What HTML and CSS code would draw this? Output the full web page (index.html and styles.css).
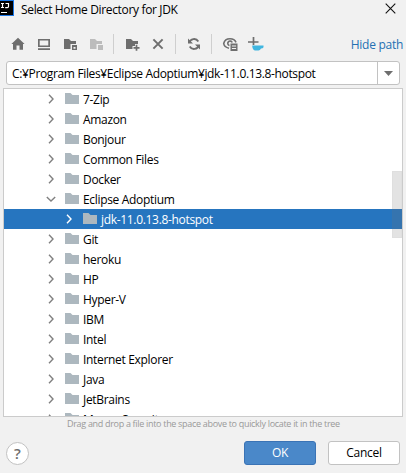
FILE: index.html
```html
<!DOCTYPE html>
<html lang="en">
<head>
<meta charset="utf-8">
<title>Select Home Directory for JDK</title>
<link rel="stylesheet" href="styles.css">
</head>
<body>
<svg class="defs" width="0" height="0">
  <symbol id="folder" viewBox="0 0 14 11"><path d="M0 0h5.5l2 2H14v9H0z" fill="#adb8bf"/></symbol>
  <symbol id="chev" viewBox="0 0 6 10"><path d="M1 .8 5 5 1 9.2" fill="none" stroke="currentColor" stroke-width="1.4"/></symbol>
</svg>
<div class="dialog">
  <header class="titlebar">
    <svg class="logo" width="14" height="16" viewBox="0 0 14 16"><path fill="#1b78e8" d="M0 0h14v16H0z"/><path fill="#000" d="M0 1h13v14H0z"/><path d="M1 3.5h3M2.5 3.5v4M1 7.5h3M5.5 3.5h3v3q0 1.2-1.2 1.2H5.2M1 12.5h6" fill="none" stroke="#fff" stroke-width="1.2"/></svg>
    <h1 class="title">Select Home Directory for JDK</h1>
    <svg class="close" width="11" height="11" viewBox="0 0 11 11"><path d="M.7.7l9.6 9.6M10.3.7L.7 10.3" stroke="#111" stroke-width="1.1"/></svg>
  </header>
  <nav class="toolbar">
    <svg class="tool" viewBox="0 0 16 16"><path fill="#6e6e6e" d="M8 1.8 14.6 8H13v5.7H9.5V9.5h-3v4.2H3V8H1.4z"/></svg>
    <svg class="tool" viewBox="0 0 16 16"><path fill="#6e6e6e" fill-rule="evenodd" d="M2 3h12v8H2zm1.7 1.6v4.8h8.6V4.6zM2 12.3h12V14H2z"/></svg>
    <svg class="tool" viewBox="0 0 16 16"><path fill="#6e6e6e" d="M2 3h5l2 2h5v3H8.5v5H2z"/><path fill="#6e6e6e" fill-rule="evenodd" d="M10 9h5v5h-5zm1.5 2v1.7h2V11z"/></svg>
    <svg class="tool dim" viewBox="0 0 16 16"><path fill="#6e6e6e" d="M2 3h5l2 2h5v3H8.5v5H2zM10 9h5v5h-5z"/></svg>
    <i class="sep"></i>
    <svg class="tool" viewBox="0 0 16 16"><path fill="#6e6e6e" d="M2 3h5l2 2h5v3h-3v2H8.5v3H2z"/><path d="M12.5 8.8v6M9.5 11.8h6" stroke="#6e6e6e" stroke-width="1.7"/></svg>
    <svg class="tool" viewBox="0 0 16 16"><path d="M3.4 3.4l9.2 9.2M12.6 3.4l-9.2 9.2" stroke="#6e6e6e" stroke-width="2"/></svg>
    <i class="sep"></i>
    <svg class="tool" viewBox="0 0 16 16"><path d="M3.2 6.8A5 5 0 0 1 12.3 5.4M12.8 9.2A5 5 0 0 1 3.7 10.6" fill="none" stroke="#6e6e6e" stroke-width="1.9"/><path fill="#6e6e6e" d="M2 2.4V7.4H7zM14 13.6V8.6H9z"/></svg>
    <i class="sep"></i>
    <svg class="tool" viewBox="0 0 16 16"><path d="M7 12.2C4.2 11.6 2 9.6 1.7 7.5 2.4 4.6 5 2.8 8 2.8s5.2 1.6 6 3.6" fill="none" stroke="#6e6e6e" stroke-width="1.6"/><path d="M7.5 9.6A2.3 2.3 0 1 1 10.2 6.5" fill="none" stroke="#6e6e6e" stroke-width="1.6"/><path fill="#6e6e6e" fill-rule="evenodd" d="M8.5 7.5h7V15h-7zm1.4 2v1h4.2v-1zm0 2.5v1h4.2v-1z"/></svg>
    <svg class="tool" viewBox="0 0 16 16"><path d="M5.5 1v8M0 6h10.5" stroke="#6e6e6e" stroke-width="1.7"/><path fill="#40b6e0" d="M4.2 9.4h11.3v1.8q-.5 1.3-2.5 1.3-1 1.8-2.5 2H7q-2.8-1-2.8-5.1z"/></svg>
    <a class="hide">Hide path</a>
  </nav>
  <div class="path"><span class="value">C:¥Program Files¥Eclipse Adoptium¥jdk-11.0.13.8-hotspot</span><span class="drop"><svg width="9" height="5" viewBox="0 0 9 5"><path d="M0 0h9L4.5 5z" fill="#6e6e6e"/></svg></span></div>
  <main class="tree">
    <div class="row"><svg class="chev"><use href="#chev"/></svg><svg class="folder"><use href="#folder"/></svg><span>7-Zip</span></div>
    <div class="row"><svg class="chev"><use href="#chev"/></svg><svg class="folder"><use href="#folder"/></svg><span>Amazon</span></div>
    <div class="row"><svg class="chev"><use href="#chev"/></svg><svg class="folder"><use href="#folder"/></svg><span>Bonjour</span></div>
    <div class="row"><svg class="chev"><use href="#chev"/></svg><svg class="folder"><use href="#folder"/></svg><span>Common Files</span></div>
    <div class="row"><svg class="chev"><use href="#chev"/></svg><svg class="folder"><use href="#folder"/></svg><span>Docker</span></div>
    <div class="row"><svg class="chev open"><use href="#chev"/></svg><svg class="folder"><use href="#folder"/></svg><span>Eclipse Adoptium</span></div>
    <div class="row selected"><svg class="chev"><use href="#chev"/></svg><svg class="folder"><use href="#folder"/></svg><span>jdk-11.0.13.8-hotspot</span></div>
    <div class="row"><svg class="chev"><use href="#chev"/></svg><svg class="folder"><use href="#folder"/></svg><span>Git</span></div>
    <div class="row"><svg class="chev"><use href="#chev"/></svg><svg class="folder"><use href="#folder"/></svg><span>heroku</span></div>
    <div class="row"><svg class="chev"><use href="#chev"/></svg><svg class="folder"><use href="#folder"/></svg><span>HP</span></div>
    <div class="row"><svg class="chev"><use href="#chev"/></svg><svg class="folder"><use href="#folder"/></svg><span>Hyper-V</span></div>
    <div class="row"><svg class="chev"><use href="#chev"/></svg><svg class="folder"><use href="#folder"/></svg><span>IBM</span></div>
    <div class="row"><svg class="chev"><use href="#chev"/></svg><svg class="folder"><use href="#folder"/></svg><span>Intel</span></div>
    <div class="row"><svg class="chev"><use href="#chev"/></svg><svg class="folder"><use href="#folder"/></svg><span>Internet Explorer</span></div>
    <div class="row"><svg class="chev"><use href="#chev"/></svg><svg class="folder"><use href="#folder"/></svg><span>Java</span></div>
    <div class="row"><svg class="chev"><use href="#chev"/></svg><svg class="folder"><use href="#folder"/></svg><span>JetBrains</span></div>
    <div class="row"><svg class="chev"><use href="#chev"/></svg><svg class="folder"><use href="#folder"/></svg><span>Mouse Security</span></div>
    <i class="thumb"></i>
  </main>
  <p class="hint">Drag and drop a file into the space above to quickly locate it in the tree</p>
  <footer class="footer">
    <button class="help">?</button>
    <button class="btn primary">OK</button>
    <button class="btn">Cancel</button>
  </footer>
</div>
</body>
</html>
```
FILE: styles.css
```css
* { box-sizing: border-box; }
body { margin: 0; }
.defs { position: absolute; }
svg { display: block; flex: none; }
.dialog {
  width: 406px; height: 473px; overflow: hidden;
  display: flex; flex-direction: column;
  background: #f1f1f1; color: #000;
  font: 12px/20px "Open Sans", "Noto Sans", sans-serif;
  letter-spacing: -0.32px; white-space: nowrap;
}
.titlebar { display: flex; height: 30px; padding-right: 10px; }
.title { margin: 0 auto 0 7px; font-size: 12px; font-weight: 400; line-height: 19px; letter-spacing: -0.34px; }
.close { margin-top: 3px; }
.toolbar { display: flex; align-items: center; height: 28px; padding: 0 3px 0 10px; }
.tool { width: 16px; height: 16px; margin-right: 10px; }
.dim { opacity: .4; }
.sep { width: 1px; height: 20px; margin: 0 10px 0 -1px; background: #cfcfcf; }
.hide { margin: 2px 0 0 auto; color: #2470b3; letter-spacing: -0.28px; }
.path {
  display: flex; height: 24px; margin: 3px 6px 0; flex: none;
  border: 1px solid #c2c2c2; border-radius: 3px; background: #fff;
}
.value { flex: 1; padding-left: 5px; line-height: 23px; letter-spacing: -0.35px; }
.drop { display: flex; width: 22px; align-items: center; justify-content: center; border-left: 1px solid #c2c2c2; }
.tree {
  position: relative; height: 329px; margin: 3px 3px 0; flex: none;
  overflow: hidden; border: 1px solid #cbcbcb; background: #fff;
}
.row { display: flex; height: 20px; padding-left: 44px; color: #000; }
.row span { line-height: 21px; }
.chev { width: 6px; height: 10px; margin: 5px 11px 0 0; color: #808080; }
.open { transform: rotate(90deg); }
.folder { width: 14px; height: 11px; margin: 4px 4px 0 0; }
.selected { padding-left: 62px; background: #2675bf; color: #fff; }
.selected .chev { color: #fff; }
.thumb { position: absolute; top: 82px; right: 0; width: 10px; height: 67px; background: rgba(115,115,115,.2); border: 1px solid rgba(115,115,115,.04); }
.hint { margin: 0 0 0 67px; font-size: 9px; line-height: 14px; letter-spacing: -0.31px; color: #999; }
.footer { display: flex; gap: 12px; padding: 10px 6px 0; }
.help {
  width: 23px; height: 23px; margin: 1px auto 0 0; padding: 0;
  border: 1px solid #c2c2c2; border-radius: 50%; background: #fff;
  color: #6e6e6e; font: 600 15px/19px "Open Sans", sans-serif;
}
.btn {
  width: 72px; height: 24px; padding: 0; border: 1px solid #c2c2c2; border-radius: 3px;
  background: #fff; color: #000; font: 12px/22px "Open Sans", sans-serif; letter-spacing: -0.3px;
}
.primary { border-color: #3a73b5; background: #4a88c9; color: #fff; }
```
